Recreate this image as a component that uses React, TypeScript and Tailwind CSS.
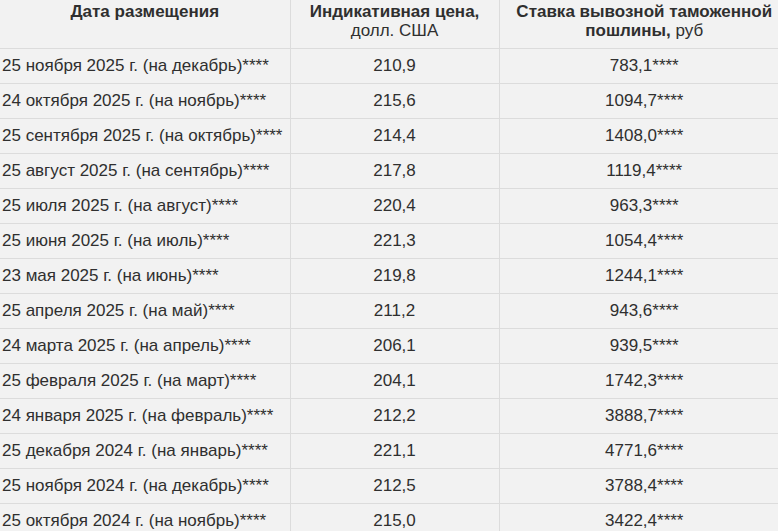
import React from 'react';

const rows: [string, string, string][] = [
  ['25 ноября 2025 г. (на декабрь)****', '210,9', '783,1****'],
  ['24 октября 2025 г. (на ноябрь)****', '215,6', '1094,7****'],
  ['25 сентября 2025 г. (на октябрь)****', '214,4', '1408,0****'],
  ['25 август 2025 г. (на сентябрь)****', '217,8', '1119,4****'],
  ['25 июля 2025 г. (на август)****', '220,4', '963,3****'],
  ['25 июня 2025 г. (на июль)****', '221,3', '1054,4****'],
  ['23 мая 2025 г. (на июнь)****', '219,8', '1244,1****'],
  ['25 апреля 2025 г. (на май)****', '211,2', '943,6****'],
  ['24 марта 2025 г. (на апрель)****', '206,1', '939,5****'],
  ['25 февраля 2025 г. (на март)****', '204,1', '1742,3****'],
  ['24 января 2025 г. (на февраль)****', '212,2', '3888,7****'],
  ['25 декабря 2024 г. (на январь)****', '221,1', '4771,6****'],
  ['25 ноября 2024 г. (на декабрь)****', '212,5', '3788,4****'],
  ['25 октября 2024 г. (на ноябрь)****', '215,0', '3422,4****'],
];

const App = () => {
  return (
    <div className="w-[778px] h-[531px] overflow-hidden bg-[#f2f2f2] text-[#2f2f2f] font-['Liberation_Sans',Arial,sans-serif] text-[17px]">
      <table className="w-[789px] table-fixed border-collapse">
        <colgroup>
          <col className="w-[290px]" />
          <col className="w-[209px]" />
          <col />
        </colgroup>
        <thead>
          <tr className="h-[48px] border-b border-[#dcdcdc] align-top leading-[19px]">
            <th className="border-r border-[#dcdcdc] pt-[2px] font-bold text-center">Дата размещения</th>
            <th className="border-r border-[#dcdcdc] pt-[2px] font-normal text-center">
              <b>Индикативная цена,</b>
              <br />
              долл. США
            </th>
            <th className="pt-[2px] font-normal text-center">
              <b>Ставка вывозной таможенной</b>
              <br />
              <b>пошлины,</b> руб
            </th>
          </tr>
        </thead>
        <tbody>
          {rows.map((r, i) => (
            <tr key={i} className="h-[35px] border-b border-[#dcdcdc]">
              <td className="border-r border-[#dcdcdc] pl-[2px] whitespace-nowrap">{r[0]}</td>
              <td className="border-r border-[#dcdcdc] text-center">{r[1]}</td>
              <td className="text-center">{r[2]}</td>
            </tr>
          ))}
        </tbody>
      </table>
    </div>
  );
};

export default App;
